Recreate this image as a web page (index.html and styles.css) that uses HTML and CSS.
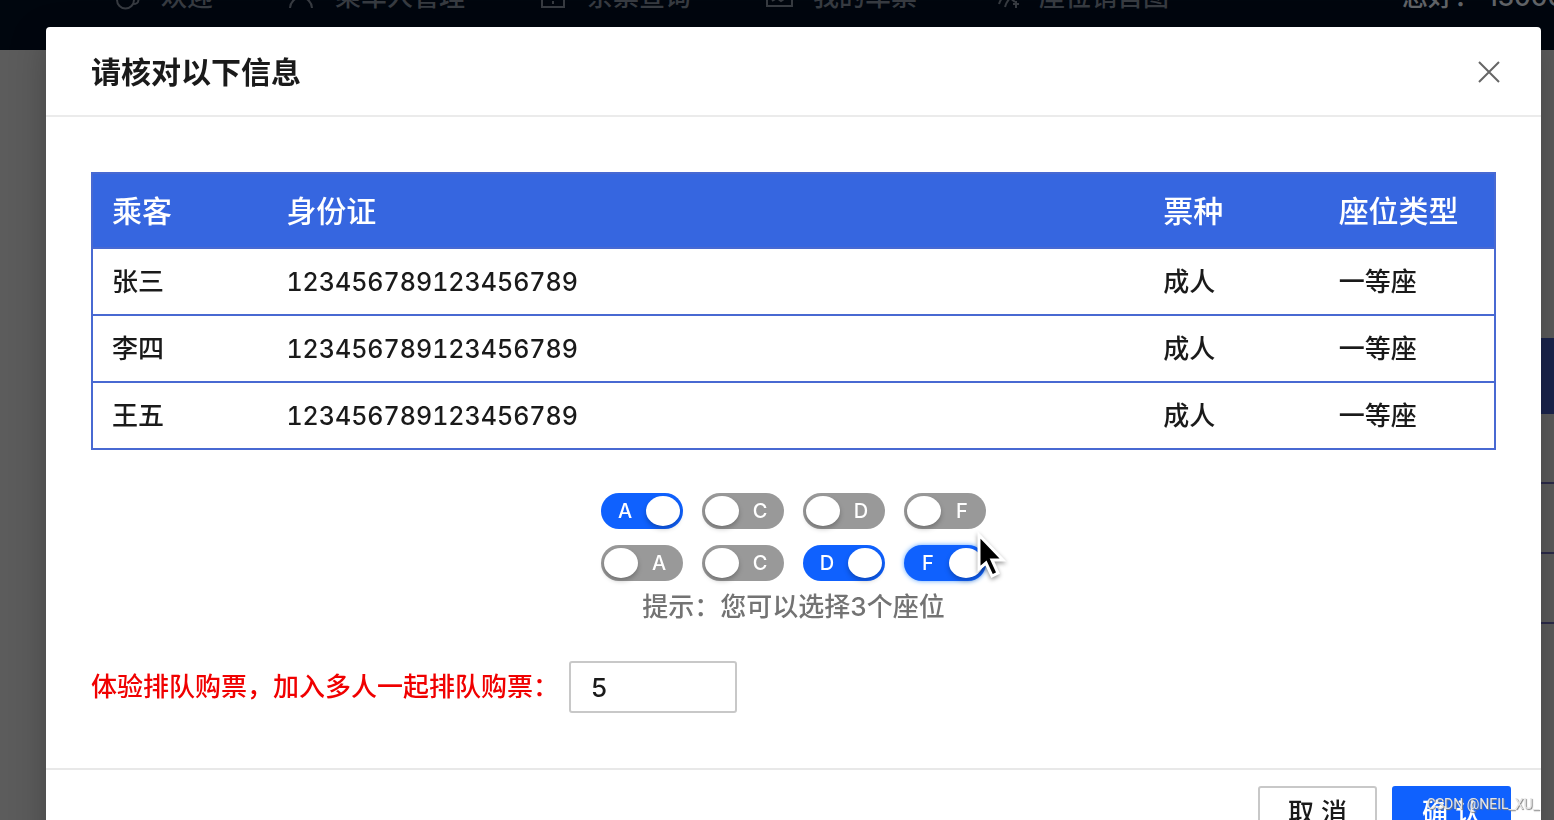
FILE: index.html
```html
<!DOCTYPE html>
<html lang="zh-CN">
<head>
<meta charset="utf-8">
<title>请核对以下信息</title>
<link rel="stylesheet" href="styles.css">
</head>
<body>
<div class="page">
  <header class="topbar">
    <nav class="nav">
      <a class="nav-item" href="#"><svg class="nav-icon" viewBox="0 0 27 27"><path d="M3 5h17v11a8.500 8.500 0 0 1-17 0zM20 13c6 0 6 7-1 7"/></svg>欢迎</a>
      <a class="nav-item" href="#"><svg class="nav-icon" viewBox="0 0 27 27"><circle cx="13" cy="8" r="6"/><path d="M2 24c1-14 21-14 22 0"/></svg>乘车人管理</a>
      <a class="nav-item" href="#"><svg class="nav-icon" viewBox="0 0 27 27"><path d="M2 3h22v20H2zM13 17v3"/></svg>余票查询</a>
      <a class="nav-item" href="#"><svg class="nav-icon" viewBox="0 0 27 27"><path d="M1 3h25v19H1zM6 17l5-3 4 3 6-4"/></svg>我的车票</a>
      <a class="nav-item" href="#"><svg class="nav-icon" viewBox="0 0 27 27"><path d="M7 20c1-3 2-5 4-7M13 23c1-4 3-7 6-10M24 17v7M21 20h6M17 13l6 5"/></svg>座位销售图</a>
    </nav>
    <div class="user">您好： 13000000000</div>
  </header>
  <main class="content">
    <div class="list">
      <div class="list-head"></div>
      <div class="list-row"></div>
      <div class="list-row"></div>
      <div class="list-row"></div>
    </div>
  </main>
</div>

<div class="mask">
  <section class="modal" role="dialog" aria-labelledby="modal-title">
    <header class="modal-header">
      <h1 class="modal-title" id="modal-title">请核对以下信息</h1>
      <button class="close" type="button" aria-label="关闭"><svg class="close-icon" viewBox="0 0 22 22"><path d="M1 1L21 21M21 1L1 21"/></svg></button>
    </header>
    <div class="modal-body">
      <table class="tickets">
        <colgroup><col class="col-narrow"><col><col class="col-narrow"><col class="col-narrow"></colgroup>
        <thead><tr><th>乘客</th><th>身份证</th><th>票种</th><th>座位类型</th></tr></thead>
        <tbody>
          <tr><td>张三</td><td class="id-number">123456789123456789</td><td>成人</td><td>一等座</td></tr>
          <tr><td>李四</td><td class="id-number">123456789123456789</td><td>成人</td><td>一等座</td></tr>
          <tr><td>王五</td><td class="id-number">123456789123456789</td><td>成人</td><td>一等座</td></tr>
        </tbody>
      </table>
      <div class="seats">
        <label class="switch"><input type="checkbox" checked><span class="seat">A</span></label>
        <label class="switch"><input type="checkbox"><span class="seat">C</span></label>
        <label class="switch"><input type="checkbox"><span class="seat">D</span></label>
        <label class="switch"><input type="checkbox"><span class="seat">F</span></label>
        <label class="switch"><input type="checkbox"><span class="seat">A</span></label>
        <label class="switch"><input type="checkbox"><span class="seat">C</span></label>
        <label class="switch"><input type="checkbox" checked><span class="seat">D</span></label>
        <label class="switch switch-active"><input type="checkbox" checked><span class="seat">F</span></label>
      </div>
      <p class="hint">提示：您可以选择3个座位</p>
      <div class="queue">
        <label class="queue-label" for="queue">体验排队购票，加入多人一起排队购票：</label>
        <input class="queue-input" id="queue" type="text" value="5">
      </div>
    </div>
    <footer class="modal-footer">
      <button class="btn" type="button">取 消</button>
      <button class="btn btn-primary" type="button">确 认</button>
    </footer>
  </section>
</div>

<svg class="cursor" viewBox="0 0 32 48"><path d="M4 4v34l7-6 6 13 6-3-6-13h11z"/></svg>
<div class="watermark">CSDN @NEIL_XU_</div>
</body>
</html>
```
FILE: styles.css
```css
* { box-sizing: border-box; }

body {
  margin: 0;
  height: 100vh;
  overflow: hidden;
  background: #5c5c5c;
  color: #1a1a1a;
  font: 500 26px/40px Inter, "Noto Sans CJK SC", sans-serif;
}

.page { height: 100%; overflow: hidden; }

.topbar {
  display: flex;
  align-items: center;
  justify-content: space-between;
  height: 106px;
  margin-top: -56px;
  padding-left: 114px;
  background: #00060e;
  white-space: nowrap;
}

.nav { display: flex; gap: 75px; }

.nav-item {
  display: flex;
  align-items: center;
  gap: 20px;
  color: #373b41;
  text-decoration: none;
}

.nav-icon {
  width: 27px;
  height: 27px;
  fill: none;
  stroke: #373b41;
  stroke-width: 2;
}

.user { width: 152px; overflow: hidden; color: #606367; }

.content { padding: 288px 0 0 46px; }
.list-head { height: 76px; background: #1a244d; }
.list-row { height: 70px; border-bottom: 2px solid #2b2a4a; }

.mask {
  position: fixed;
  inset: 0;
  padding: 27px 13px 0 46px;
  overflow: hidden;
}

.modal {
  background: #fff;
  border-radius: 4px;
  box-shadow: 0 12px 36px rgba(0, 0, 0, 0.25);
}

.modal-header {
  display: flex;
  align-items: center;
  justify-content: space-between;
  height: 90px;
  padding: 2px 41px 0 45px;
  border-bottom: 2px solid #ebebeb;
}

.modal-title { margin: 0; font-size: 30px; font-weight: 700; }

.close {
  display: flex;
  padding: 0;
  border: 0;
  background: none;
}

.close-icon {
  width: 22px;
  height: 22px;
  fill: none;
  stroke: #666;
  stroke-width: 2;
}

.modal-body { padding: 55px 45px; }

.tickets {
  width: 100%;
  table-layout: fixed;
  border-collapse: collapse;
  border: 2px solid #4869d2;
}

.col-narrow { width: 12.5%; }

.tickets th {
  height: 75px;
  padding: 0 19px;
  background: #3666e0;
  color: #fff;
  font-size: 30px;
  font-weight: 500;
  text-align: left;
}

.tickets td {
  height: 67px;
  padding: 0 19px;
  border-top: 2px solid #4869d2;
}

.tickets .id-number { font-size: 25px; font-variant-numeric: tabular-nums; }

.seats {
  display: grid;
  grid-template-columns: repeat(4, 82px);
  gap: 16px 19px;
  justify-content: center;
  margin-top: 43px;
}

.switch { position: relative; display: block; height: 36px; }

.switch input {
  appearance: none;
  display: flex;
  align-items: center;
  width: 100%;
  height: 100%;
  margin: 0;
  padding: 0 3px;
  border-radius: 18px;
  background: #999;
}

.switch input::before {
  content: "";
  width: 34px;
  height: 30px;
  border-radius: 50%;
  background: #fff;
  box-shadow: 0 3px 5px rgba(0, 0, 0, 0.25);
}

.switch input:checked { justify-content: flex-end; background: #0f61fe; }
.switch-active input { box-shadow: 0 0 5px #61a7ff; }

.seat {
  position: absolute;
  top: 0;
  right: 10px;
  width: 28px;
  color: #fff;
  font-size: 20px;
  line-height: 36px;
  text-align: center;
  pointer-events: none;
}

.switch input:checked + .seat { right: auto; left: 10px; }

.hint { margin: 6px 0 0; color: #737373; text-align: center; }

.queue {
  display: flex;
  align-items: center;
  gap: 10px;
  margin-top: 34px;
}

.queue-label { color: #f00000; }

.queue-input {
  width: 168px;
  height: 52px;
  padding: 0 20px;
  border: 2px solid #c8c8c8;
  border-radius: 3px;
  color: #1a1a1a;
  font: inherit;
}

.modal-footer {
  display: flex;
  justify-content: flex-end;
  gap: 15px;
  padding: 16px 30px;
  border-top: 2px solid #e8e8e8;
}

.btn {
  width: 119px;
  height: 54px;
  padding: 0;
  border: 2px solid #c8c8c8;
  border-radius: 3px;
  background: #fff;
  color: #1a1a1a;
  font: inherit;
}

.btn-primary { border-color: #0f61fe; background: #0f61fe; color: #fff; }

.cursor {
  position: fixed;
  top: 531px;
  left: 975px;
  width: 32px;
  height: 48px;
  fill: #000;
  stroke: #fff;
  stroke-width: 3;
  filter: drop-shadow(0 2px 2px rgba(0, 0, 0, 0.4));
}

.watermark {
  position: fixed;
  right: 15px;
  bottom: 6px;
  color: #e6e6e6;
  font: 14px/20px Roboto, sans-serif;
  text-shadow: 1px 1px 1px #777;
}
```
